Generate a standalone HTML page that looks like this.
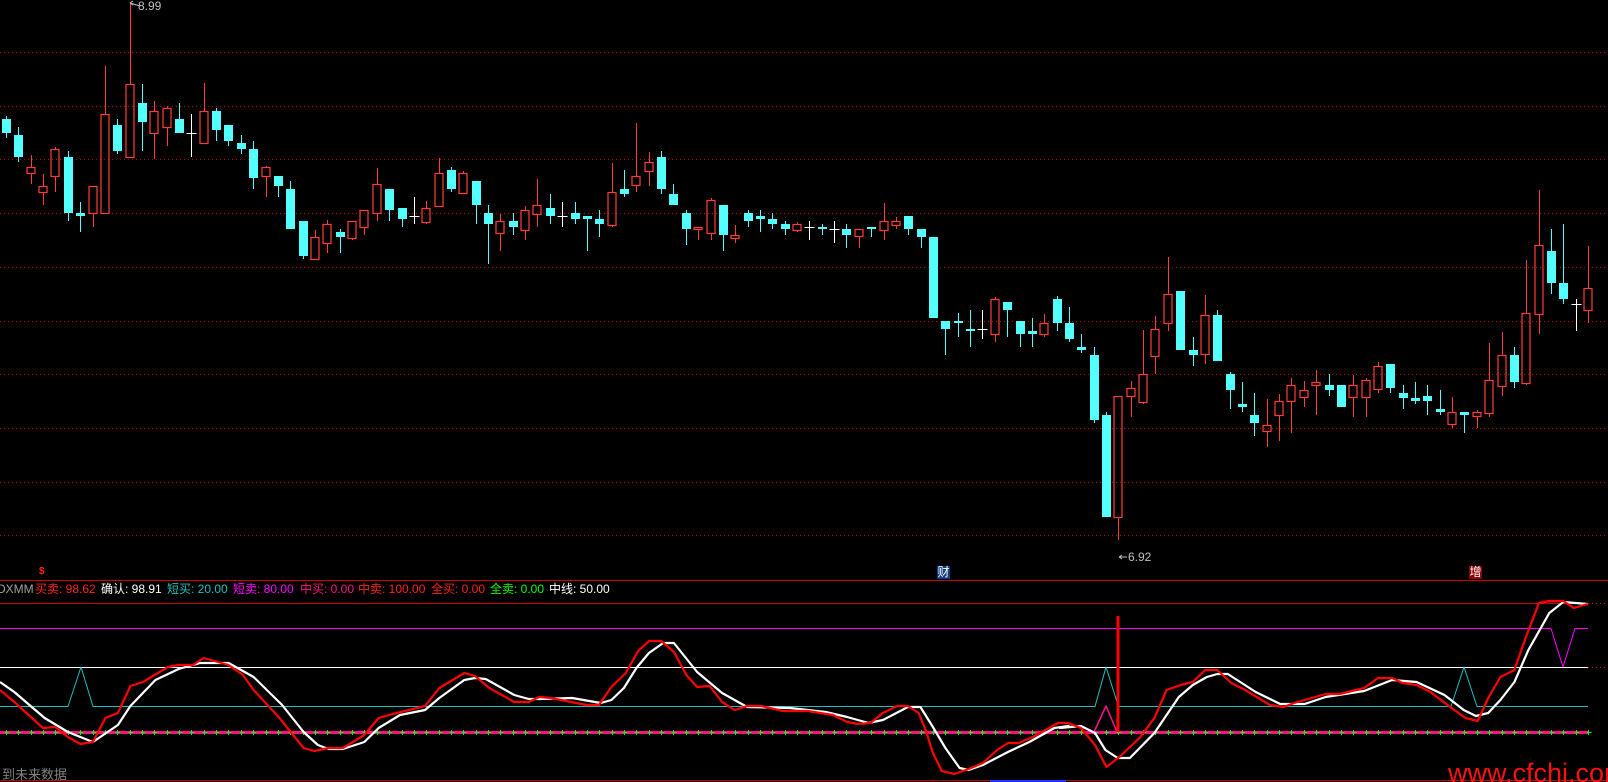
<!DOCTYPE html>
<html><head><meta charset="utf-8">
<style>
html,body{margin:0;padding:0;background:#000;width:1608px;height:782px;overflow:hidden;position:relative;font-family:"Liberation Sans","Noto Sans CJK SC",sans-serif}
svg{position:absolute;left:0;top:0}
.t{position:absolute;top:582px;font-size:12px;line-height:14px;white-space:nowrap}
</style></head><body>
<svg id="s" width="1608" height="782" xmlns="http://www.w3.org/2000/svg"></svg>
<div class="t" style="left:-3px;color:#a0a0a0">DXMM</div>
<div class="t" style="left:35px;color:#ff2020">买卖: 98.62</div>
<div class="t" style="left:101px;color:#ffffff">确认: 98.91</div>
<div class="t" style="left:167px;color:#20c0c0">短买: 20.00</div>
<div class="t" style="left:233px;color:#ff00ff">短卖: 80.00</div>
<div class="t" style="left:300px;color:#ff1080">中买: 0.00</div>
<div class="t" style="left:358px;color:#ff2020">中卖: 100.00</div>
<div class="t" style="left:431px;color:#ff2020">全买: 0.00</div>
<div class="t" style="left:490px;color:#00ff00">全卖: 0.00</div>
<div class="t" style="left:549px;color:#ffffff">中线: 50.00</div>
<div style="position:absolute;left:2px;top:764px;font-size:13px;color:#808080">到未来数据</div>
<div style="position:absolute;left:1448px;top:758px;font-size:27px;color:#ff1010;font-family:'Liberation Sans',sans-serif">www.cfchi.com</div>
<div style="position:absolute;left:937px;top:566px;width:13px;height:13px;background:#103c80;color:#fff;font-size:12px;line-height:13px;text-align:center">财</div>
<div style="position:absolute;left:1469px;top:566px;width:13px;height:13px;background:#900000;color:#fff;font-size:12px;line-height:13px;text-align:center">增</div>
<div style="position:absolute;left:39px;top:567px;color:#ff2020;font-size:10px;font-weight:bold;line-height:10px">$</div>
<div style="position:absolute;left:138px;top:0px;color:#c0c0c0;font-size:12px;line-height:13px">8.99</div>
<div style="position:absolute;left:1128px;top:551px;color:#c0c0c0;font-size:12px;line-height:13px">6.92</div>
<script>
var s=document.getElementById('s'),h='';
function L(x1,y1,x2,y2,c,w,d){h+='<line x1="'+x1+'" y1="'+y1+'" x2="'+x2+'" y2="'+y2+'" stroke="'+c+'" stroke-width="'+(w||1)+'"'+(d?' stroke-dasharray="'+d+'"':'')+'/>';}
[52,106,159,213,267,321,374,428,482,535].forEach(function(y){L(0,y+.5,1608,y+.5,'#b00000',1,'1 3');});
var C=[
[119,133,116,138,'c'],[135,157,127,162,'c'],[167,173,155,184,'r'],[186,192,174,205,'r'],[149,176,147,192,'r'],[157,213,151,221,'c'],[213,216,202,232,'c'],[186,213,186,227,'r'],[114,213,66,213,'r'],[125,151,119,154,'c'],
[84,157,3,157,'r'],[103,122,84,151,'c'],[111,133,101,159,'r'],[108,127,106,146,'r'],[119,133,103,133,'c'],[133,133,114,157,'w'],[111,143,83,143,'r'],[111,130,108,141,'c'],[125,141,125,146,'c'],[143,149,135,154,'c'],
[149,178,141,189,'c'],[167,176,166,197,'r'],[176,186,176,197,'c'],[189,229,181,229,'c'],[221,256,221,259,'c'],[237,259,230,259,'r'],[224,243,220,253,'r'],[232,237,229,253,'c'],[221,238,221,240,'r'],[210,227,210,235,'r'],
[184,213,168,221,'r'],[189,210,189,221,'c'],[208,219,208,227,'c'],[216,216,197,224,'w'],[208,222,201,224,'r'],[173,206,158,206,'r'],[170,189,167,192,'c'],[173,193,171,193,'r'],[181,205,181,224,'c'],[213,224,205,264,'c'],
[221,233,214,251,'r'],[221,227,213,235,'c'],[210,230,206,240,'r'],[205,214,179,227,'r'],[208,216,194,224,'c'],[216,216,202,227,'w'],[213,219,202,224,'c'],[216,219,216,251,'c'],[219,224,210,237,'c'],[192,225,163,227,'r'],
[189,194,170,197,'c'],[176,185,123,192,'r'],[162,171,152,186,'r'],[157,189,151,194,'c'],[194,205,184,205,'c'],[213,229,210,245,'c'],[227,229,227,240,'r'],[200,233,198,240,'r'],[205,235,205,251,'c'],[235,238,225,243,'r'],
[213,221,210,227,'c'],[216,219,210,232,'c'],[219,224,213,229,'c'],[224,229,221,235,'c'],[224,230,222,232,'r'],[227,227,221,240,'w'],[227,229,224,235,'c'],[229,229,221,243,'w'],[229,235,224,248,'c'],[229,236,229,248,'r'],
[227,229,227,237,'c'],[221,230,203,240,'r'],[221,225,217,229,'r'],[216,229,216,235,'c'],[229,237,229,248,'c'],[237,318,237,318,'c'],[321,329,321,355,'c'],[321,323,313,337,'c'],[329,331,310,347,'c'],[329,329,310,339,'w'],
[299,334,297,342,'r'],[302,310,302,337,'c'],[321,334,321,347,'c'],[331,334,318,347,'c'],[323,334,314,337,'r'],[299,323,296,331,'c'],[323,339,307,342,'c'],[347,350,334,353,'c'],[355,420,347,423,'c'],[415,517,412,517,'c'],
[396,517,396,540,'r'],[388,396,381,417,'r'],[374,402,330,404,'r'],[329,356,316,374,'r'],[294,323,257,331,'r'],[291,350,291,350,'c'],[350,355,337,366,'c'],[315,354,295,364,'r'],[315,361,310,361,'c'],[374,390,372,409,'c'],
[404,407,382,412,'c'],[415,423,393,436,'c'],[425,431,399,447,'r'],[401,415,394,441,'r'],[385,401,378,433,'r'],[390,397,381,407,'r'],[382,385,370,415,'r'],[385,390,374,396,'c'],[385,407,385,407,'c'],[385,397,375,417,'r'],
[380,397,378,417,'r'],[366,389,362,393,'r'],[364,388,364,393,'c'],[393,398,385,409,'c'],[398,401,382,404,'c'],[396,401,385,415,'c'],[409,412,390,415,'c'],[412,424,397,428,'r'],[412,415,412,433,'c'],[412,416,410,428,'r'],
[380,413,343,417,'r'],[355,386,332,396,'r'],[355,382,347,388,'c'],[313,383,260,385,'r'],[245,314,190,334,'r'],[251,283,229,294,'c'],[283,299,224,304,'c'],[304,304,299,331,'w'],[288,310,246,323,'r']];
var CY='#54ffff',RD='#ff3c3c';
C.forEach(function(c,i){
 var x=Math.round(6+12.36*i)+.5,t=c[0],b=c[1];
 if(c[4]=='w'){L(x,c[2],x,c[3],'#fff');L(x-5,t+.5,x+5,t+.5,'#fff');return;}
 var col=c[4]=='r'?RD:CY;
 if(c[4]=='r'){L(x,c[2],x,t,col);L(x,b,x,c[3],col);
  h+='<rect x="'+(x-4.5)+'" y="'+(t+.5)+'" width="8" height="'+Math.max(b-t,2)+'" fill="none" stroke="'+col+'" stroke-width="1.2"/>';}
 else{L(x,c[2],x,c[3],col);h+='<rect x="'+(x-4.5)+'" y="'+t+'" width="9" height="'+Math.max(b-t,2)+'" fill="'+col+'"/>';}
});
L(130,3,140,6,'#c0c0c0');L(130,3,133,1,'#c0c0c0');L(130,3,133,5,'#c0c0c0');
L(1119,557,1127,557,'#c0c0c0');L(1119,557,1122,555,'#c0c0c0');L(1119,557,1122,559,'#c0c0c0');
L(0,580.5,1608,580.5,'#d00000');
L(0,603.5,1588,603.5,'#d00000');L(1588,603.5,1608,603.5,'#d00000',1,'1 3');
L(0,780.5,1608,780.5,'#c00000');
L(990,781,1066,781,'#2030ff',2);
function P(pts,c,w){h+='<polyline points="'+pts.map(function(p){return p.join(',')}).join(' ')+'" fill="none" stroke="'+c+'" stroke-width="'+w+'" stroke-linejoin="round"/>';}
P([[0,628.5],[1551,628.5],[1563,667],[1575,628.5],[1588,628.5]],'#ff00ff',1);
L(0,667.5,1588,667.5,'#ffffff');L(1588,667.5,1608,667.5,'#d00000',1,'1 3');
P([[0,706.5],[68,706.5],[81,667],[93,706.5],[1095,706.5],[1106,667],[1117,702]],'#20c0c0',1);
P([[1117,706.5],[1451,706.5],[1464,667],[1477,706.5],[1588,706.5]],'#20c0c0',1);
L(0,732.5,1588,732.5,'#ff1080',3);
for(var i=0;i<129;i++){var x=Math.round(6+12.36*i)+.5;L(x-2,732.5,x+3,732.5,'#00ff00');L(x,730,x,735,'#00ff00');}
P([[1094,732],[1106,706],[1117,732]],'#ff1090',1.5);
function conv(a,ox,sc){return a.map(function(p){return [Math.round((ox+p[0]/sc)*10)/10,p[1]];});}
var r7=[[0,690],[40,702],[120,728],[155,727],[190,737],[225,744],[260,742],[295,718],[330,713],[365,686],[400,682],[470,667],[500,665],[540,665],[570,658],[600,661],[640,665],[680,675],[710,690],[780,717],[850,748],[880,751],[920,748],[960,748],[1020,735],[1060,718],[1100,714],[1190,706],[1230,688],[1300,673],[1330,676],[1370,688],[1440,702],[1480,702],[1510,697]];
var r8=[[0,697],[30,698],[130,705],[165,705],[200,687],[240,673],[275,651],[305,641],[340,641],[375,652],[410,675],[440,687],[475,686],[510,702],[545,710],[580,706],[620,706],[680,711],[750,711],[820,715],[860,722],[890,724],[925,723],[960,713],[1000,706],[1030,706],[1060,713],[1080,730],[1100,753],[1125,771],[1160,774],[1200,769],[1240,763],[1280,750],[1310,743],[1340,743],[1380,737],[1450,723],[1480,723]];
var r9=[[30,724],[60,728],[100,745],[133,767],[170,757],[230,737],[270,718],[305,690],[345,685],[380,682],[415,670],[450,670],[490,683],[530,690],[600,705],[640,707],[670,703],[760,694],[800,694],[870,688],[910,678],[950,678],[980,683],[1020,685],[1060,692],[1120,708],[1160,718],[1195,721],[1225,698],[1260,677],[1300,670],[1330,640],[1370,603],[1400,601],[1440,601],[1470,608],[1510,604]];
var w7=[[0,682],[40,692],[125,718],[190,732],[260,742],[330,725],[365,706],[435,680],[500,669],[560,663],[640,663],[710,677],[790,705],[850,732],[890,745],[920,749],[960,749],[1020,742],[1060,728],[1120,715],[1190,710],[1230,698],[1300,680],[1330,678],[1360,679],[1440,695],[1480,699]];
var w8=[[0,699],[90,698],[170,703],[200,700],[235,688],[270,668],[305,653],[345,643],[375,643],[440,672],[510,693],[580,707],[700,708],[800,712],[860,717],[920,723],[960,720],[1030,707],[1065,707],[1100,727],[1135,748],[1175,768],[1200,770],[1240,765],[1310,752],[1370,742],[1440,728],[1480,726]];
var w9=[[0,728],[60,726],[100,733],[130,750],[165,758],[200,758],[270,733],[340,697],[380,685],[420,677],[450,674],[480,674],[560,692],[630,704],[700,704],[760,697],[870,691],[950,680],[1020,682],[1100,695],[1155,710],[1190,716],[1225,713],[1260,700],[1300,682],[1340,650],[1400,613],[1440,602],[1510,604]];
P(conv(w7,0,2.8).concat(conv(w8,540,2.8)).concat(conv(w9,1060,2.861)),'#ffffff',2.2);
P(conv(r7,0,2.8).concat(conv(r8,540,2.8)).concat(conv(r9,1060,2.861)),'#ff0000',2.2);
L(1118,616,1118,732,'#ff0000',3);
s.innerHTML=h;
</script>
</body></html>
